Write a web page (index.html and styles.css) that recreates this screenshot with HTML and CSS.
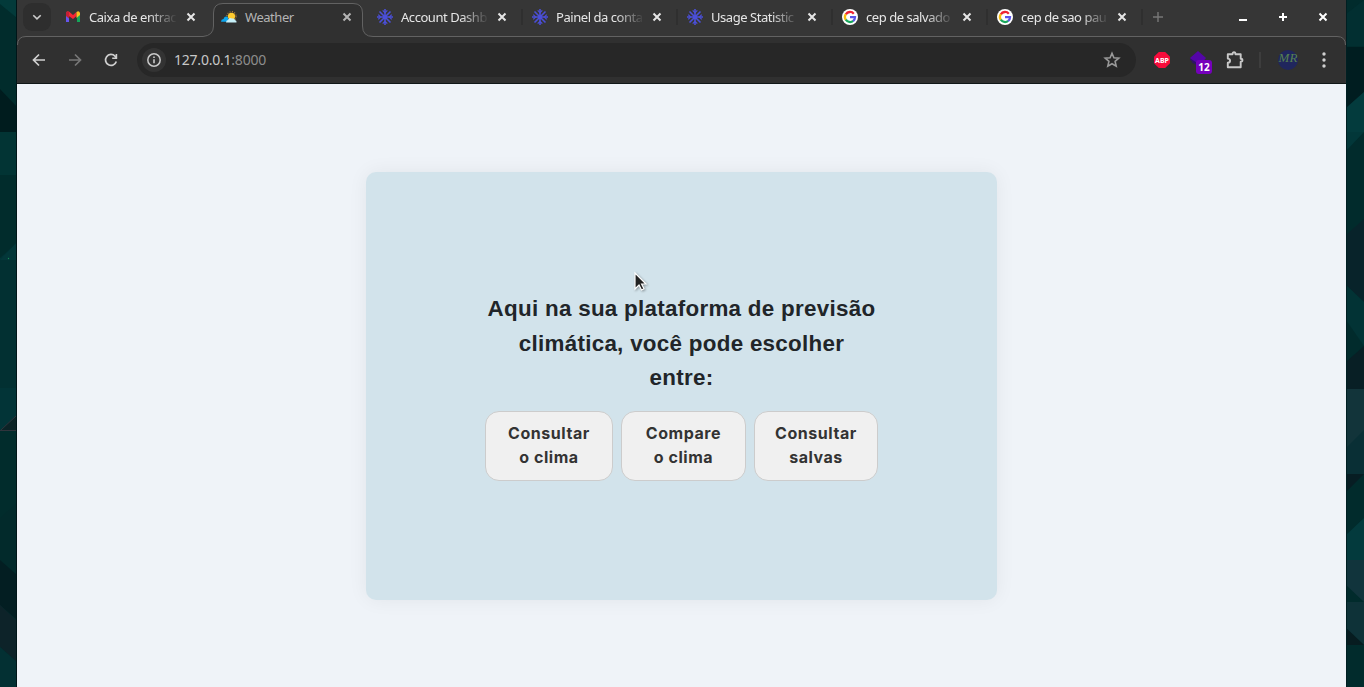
FILE: index.html
```html
<!DOCTYPE html>
<html lang="pt-BR">
<head>
<meta charset="utf-8">
<title>Weather</title>
<link rel="stylesheet" href="styles.css">
</head>
<body>
<svg width="0" height="0" class="defs">
  <symbol id="x" viewBox="0 0 16 16"><path d="M4.5 4.5l7 7M11.5 4.5l-7 7" fill="none" stroke="currentColor" stroke-width="2"/></symbol>
  <symbol id="flake" viewBox="0 0 16 16"><g fill="none" stroke="#4b4fd8" stroke-width="1.6"><path d="M8 0v16M0 8h16M2.500 2.500l11 11M13.500 2.500l-11 11"/><path d="M5.700 1.300L8 3.600l2.300-2.300M5.700 14.700L8 12.400l2.300 2.300M1.300 5.700L3.600 8l-2.300 2.300M14.700 5.700L12.400 8l2.300 2.300" stroke-width="1.2"/></g></symbol>
  <symbol id="google" viewBox="0 0 16 16"><circle cx="8" cy="8" r="8" fill="#fff"/><g fill="none" stroke-width="2.3"><path d="M3.8 5.3A5 5 0 0 1 11.8 4.7" stroke="#ee2434"/><path d="M3.8 5.2a5 5 0 0 0 0 5.6" stroke="#f8bd10"/><path d="M3.8 10.7a5 5 0 0 0 7.4 1.2" stroke="#18a65c"/><path d="M11.1 12A5 5 0 0 0 13 8.2H8" stroke="#5b55e8"/></g></symbol>
</svg>
<div class="desktop">
  <svg class="edge" width="17" height="687" viewBox="0 0 17 687">
    <rect width="17" height="687" fill="#012c2c"/>
    <path d="M0 0h17v18L0 4z" fill="#033a3a"/>
    <path d="M0 89l17 18v25H0z" fill="#001c1e"/>
    <path d="M0 132h17v43H0z" fill="#023434"/>
    <path d="M0 258l17-15v187H0z" fill="#023437"/>
    <path d="M0 260h17v128H0z" fill="#023032"/>
    <path d="M17 242v18H0z" fill="#033739"/>
    <path d="M1 430l16-15v15z" fill="#0b2326"/>
    <path d="M0 430.5h17M1 430l16-15" stroke="#30343c" fill="none"/>
    <path d="M0 518l17-15v72L0 560z" fill="#022a2b"/>
    <path d="M0 560l17 15v45L0 605z" fill="#031e22"/>
    <path d="M0 605l17 16v41L0 647z" fill="#0d2329"/>
    <path d="M0 647l17 15v25H0z" fill="#033033"/>
    <circle cx="8.500" cy="258.500" r=".7" fill="#168555"/>
    <path d="M16.500 0v687" stroke="#001518"/>
  </svg>
  <main class="window">
    <header class="chrome">
      <svg class="outline" width="1329" height="83" viewBox="17 0 1329 83">
        <path d="M17.500 83V45Q17.500 36.500 26 36.500H203Q213.500 35.500 213.500 26V13Q213.500 3.500 223 3.500H353Q362.500 3.500 362.500 13V26Q362.500 36.500 373 36.500H1337Q1345.500 36.500 1345.500 45V83" fill="#303030"/>
        <path d="M17.500 45Q17.500 36.500 26 36.500H203Q213.500 35.500 213.500 26V13Q213.500 3.500 223 3.500H353Q362.500 3.500 362.500 13V26Q362.500 36.500 373 36.500H1337Q1345.500 36.500 1345.500 45" fill="none" stroke="#626262"/>
      </svg>
      <div class="tabs">
        <div class="search-tabs"><svg width="14" height="14" viewBox="0 0 14 14"><path d="M3.300 5.200L7 8.800l3.700-3.600" fill="none" stroke="#ccc" stroke-width="1.600"/></svg></div>
        <div class="tab wide">
          <svg class="icon" viewBox="0 0 16 16"><path d="M1 4v9h3V6.500z" fill="#6655ef"/><path d="M12 6v7h3V4z" fill="#15a65a"/><path d="M1 5V3.500Q2.500 1.500 4.500 3L8 6l3.500-3v4L8 10 1 5z" fill="#f52535"/><path d="M1 3v4l3 2.500V3z" fill="#c42035"/><path d="M11.500 3Q14 1 15 4v2l-3.500 3z" fill="#f8bd20"/></svg>
          <span class="name faded">Caixa de entrac</span><svg class="close"><use href="#x"/></svg>
        </div>
        <div class="tab wide current">
          <svg class="icon" viewBox="0 0 16 16"><circle cx="10.500" cy="7.300" r="4.600" fill="none" stroke="#b98236" stroke-width="1.200" stroke-dasharray="1 1.400"/><circle cx="10.500" cy="7.300" r="3.600" fill="#ffca2e"/><path d="M0 12.700q0-2.400 2.500-2.700 1-3.200 4-2.200l2 4.900z" fill="#0ca5ee"/><path d="M5 13.500q0-2.500 2-2.500 1-3 4-1.500 3-.5 3 1.500 2 .5 1.500 2.500z" fill="#c6eff8"/></svg>
          <span class="name">Weather</span><svg class="close"><use href="#x"/></svg>
        </div>
        <div class="tab"><svg class="icon"><use href="#flake"/></svg><span class="name faded">Account Dashb</span><svg class="close"><use href="#x"/></svg><i class="sep"></i></div>
        <div class="tab"><svg class="icon"><use href="#flake"/></svg><span class="name faded">Painel da conta</span><svg class="close"><use href="#x"/></svg><i class="sep"></i></div>
        <div class="tab"><svg class="icon"><use href="#flake"/></svg><span class="name faded">Usage Statistic</span><svg class="close"><use href="#x"/></svg><i class="sep"></i></div>
        <div class="tab"><svg class="icon"><use href="#google"/></svg><span class="name faded">cep de salvado</span><svg class="close"><use href="#x"/></svg><i class="sep"></i></div>
        <div class="tab"><svg class="icon"><use href="#google"/></svg><span class="name faded">cep de sao pau</span><svg class="close"><use href="#x"/></svg><i class="sep"></i></div>
        <svg class="new-tab" width="12" height="12" viewBox="0 0 12 12"><path d="M6 1v10M1 6h10" stroke="#777" stroke-width="1.400"/></svg>
        <div class="controls">
          <svg viewBox="0 0 16 16"><path d="M4 11h8" stroke="#fff" stroke-width="2"/></svg>
          <svg viewBox="0 0 16 16"><path d="M8 4v8M4 8h8" stroke="#fff" stroke-width="2"/></svg>
          <svg class="white"><use href="#x"/></svg>
        </div>
      </div>
      <div class="toolbar">
        <div class="nav">
          <svg viewBox="0 0 16 16"><path d="M14 8H3M8 2.500L2.500 8 8 13.500" fill="none" stroke="#d0d0d0" stroke-width="1.700"/></svg>
          <svg viewBox="0 0 16 16"><path d="M2 8h11M8 2.500L13.500 8 8 13.500" fill="none" stroke="#777" stroke-width="1.700"/></svg>
          <svg viewBox="0 0 16 16"><path d="M13.300 9.500A5.500 5.500 0 1 1 12 4.100L13.500 6" fill="none" stroke="#d0d0d0" stroke-width="1.700"/><path d="M14.200 2v5H9.200V5.400h3.400V2z" fill="#d0d0d0"/></svg>
        </div>
        <div class="omnibox">
          <div class="info"><svg width="16" height="16" viewBox="0 0 16 16"><circle cx="8" cy="8" r="6.200" fill="none" stroke="#c9c9c9" stroke-width="1.500"/><path d="M8 7.200v4M8 4.500v1.600" stroke="#c9c9c9" stroke-width="1.600"/></svg></div>
          <span class="url">127.0.0.1<span class="port">:8000</span></span>
          <svg class="star" width="18" height="18" viewBox="0 0 18 18"><path d="M9 2.300l1.900 4.500 4.900.4-3.700 3.200 1.100 4.800L9 12.700l-4.200 2.500 1.100-4.800-3.700-3.200 4.900-.4z" fill="none" stroke="#999" stroke-width="1.600"/></svg>
        </div>
        <div class="extensions">
          <div class="abp">ABP</div>
          <div class="ext"><svg width="18" height="18" viewBox="0 0 18 18"><path d="M8 0L0 7l3 4 8 2 5-6z" fill="#5405a8"/><path d="M0 8l6 4M2 10.500l5 3" stroke="#30126a" stroke-width="1.500"/></svg><b class="count">12</b></div>
          <svg class="puzzle" width="20" height="20" viewBox="0 0 20 20"><path d="M2.800 4.200h4.700c0-2.600 3-2.600 3 0h5.200v4.600c2.300 0 2.300 2.900 0 2.900v5.500H2.800v-4.400c3-.3 3-3.900 0-4.200z" fill="none" stroke="#c8c8c8" stroke-width="1.900" stroke-linejoin="round"/></svg>
          <i class="divider"></i>
          <div class="avatar"><span class="initials">MR</span></div>
          <svg class="menu" width="4" height="16" viewBox="0 0 4 16"><g fill="#d0d0d0"><circle cx="2" cy="2" r="1.700"/><circle cx="2" cy="8" r="1.700"/><circle cx="2" cy="14" r="1.700"/></g></svg>
        </div>
      </div>
    </header>
    <section class="page">
      <div class="card">
        <h1 class="title">Aqui na sua plataforma de previsão climática, você pode escolher entre:</h1>
        <div class="choices">
          <button class="choice">Consultar<br>o clima</button>
          <button class="choice">Compare<br>o clima</button>
          <button class="choice">Consultar<br>salvas</button>
        </div>
      </div>
    </section>
  </main>
  <svg class="edge" width="18" height="687" viewBox="0 0 18 687">
    <rect width="18" height="687" fill="#012b2c"/>
    <path d="M0 14L18 0v46H0z" fill="#022f31"/>
    <path d="M0 47h18v45L0 108z" fill="#001d20"/>
    <path d="M0 108l18-16v40H0z" fill="#033b3d"/>
    <path d="M0 132h18L0 151z" fill="#023739"/>
    <path d="M0 235l18-16v83L0 285z" fill="#08232a"/>
    <path d="M0 285l18 17v44L0 320z" fill="#023335"/>
    <path d="M0 362l18-16v43H0z" fill="#081f25"/>
    <path d="M0 389h18v85H0z" fill="#12343a"/>
    <path d="M0 448l18-18v44H0z" fill="#092f35"/>
    <path d="M0 474h18L0 492z" fill="#071d23"/>
    <path d="M0 535l18-17v42H0z" fill="#033a3d"/>
    <path d="M0 560h18v42L0 585z" fill="#11343c"/>
    <path d="M0 602h18v43L0 628z" fill="#0e3238"/>
    <path d="M0 628l18 17H0z" fill="#071c20"/>
    <path d="M.500 0v687" stroke="#001f22"/>
  </svg>
  <svg class="cursor" width="16" height="22" viewBox="0 0 16 22"><path d="M2 2v16l4-4 2.500 5 2.500-1.200-2.400-4.800H13z" fill="#222" stroke="#fff" stroke-width="1.200"/></svg>
</div>
</body>
</html>
```

FILE: styles.css
```css
* { box-sizing: border-box; }
body { margin: 0; overflow: hidden; font-family: "Noto Sans", sans-serif; }
.defs { position: absolute; }
.desktop { position: relative; display: flex; width: 1364px; height: 687px; background: #012c2c; }
.edge { flex: none; display: block; }
.window { flex: 1; display: flex; flex-direction: column; min-width: 0; }
.chrome { position: relative; height: 84px; background: #363636; border-bottom: 1px solid #111818; }
.outline { position: absolute; left: 0; top: 0; }
.tabs { position: relative; display: flex; align-items: center; height: 34px; padding-left: 6px; }
.search-tabs { display: flex; align-items: center; justify-content: center; width: 28px; height: 28px; margin-right: 6px; border-radius: 9px; background: #2e2e2e; }
.tab { display: flex; align-items: center; flex: none; width: 155px; padding-left: 8px; font-size: 13px; color: #e6e6e6; }
.wide { width: 156px; }
.icon { flex: none; width: 16px; height: 16px; }
.name { width: 93px; margin: 0 0 0 8px; white-space: nowrap; letter-spacing: -.45px; }
.faded { mask-image: linear-gradient(90deg, #000 60px, transparent 88px); }
.close { flex: none; width: 16px; height: 16px; }
.wide .close { margin-left: 1px; }
.current { color: #b4b4b4; }
.sep { width: 2px; height: 16px; margin-left: 11px; background: #2f2f2f; }
.new-tab { margin-left: 8px; }
.controls { display: flex; gap: 24px; margin-left: auto; padding-right: 15px; }
.controls svg { width: 16px; height: 16px; }
.white { color: #fff; }
.toolbar { position: relative; display: flex; align-items: center; height: 34px; margin-top: 9px; padding-left: 14px; }
.nav { display: flex; gap: 20px; margin-right: 18px; }
.nav svg { width: 16px; height: 16px; }
.omnibox { display: flex; align-items: center; width: 999px; height: 34px; padding: 0 15px 0 5px; border-radius: 17px; background: #272727; }
.info { display: flex; align-items: center; justify-content: center; width: 24px; height: 24px; border-radius: 12px; background: #333; }
.url { margin: 0 0 2px 8px; font-size: 14px; letter-spacing: -.22px; color: #c8c8c8; }
.port { color: #8d8d8d; }
.star { margin-left: auto; }
.extensions { display: flex; align-items: center; margin-left: 18px; }
.abp { display: flex; align-items: center; justify-content: center; width: 16px; height: 16px; background: #f70b3b; color: #fff; font: bold 7px "Noto Sans", sans-serif; clip-path: polygon(30% 0, 70% 0, 100% 30%, 100% 70%, 70% 100%, 30% 100%, 0 70%, 0 30%); }
.ext { position: relative; width: 18px; height: 18px; margin-left: 20px; }
.count { position: absolute; left: 6px; top: 9px; width: 16px; height: 14px; border-radius: 3px; background: #7500bb; color: #fff; font: bold 10px/15px "Noto Sans", sans-serif; text-align: center; }
.puzzle { margin-left: 17px; }
.divider { width: 2px; height: 16px; margin-left: 14px; background: #3d3d3d; }
.avatar { display: flex; align-items: center; justify-content: center; width: 20px; height: 20px; margin-left: 17px; border-radius: 10px; background: #20265d; }
.initials { color: #568051; font: italic 13px/20px "Liberation Serif", serif; transform: translateY(-2px); }
.menu { margin-left: 24px; }
.page { flex: 1; display: flex; align-items: flex-start; justify-content: center; padding-top: 88px; background: #eff3f8; }
.card { display: flex; flex-direction: column; align-items: center; width: 631px; height: 428px; padding-top: 120px; border-radius: 10px; background: #d2e3eb; box-shadow: 0 0 20px rgba(0, 0, 0, .06); }
.title { width: 393px; margin: 0 0 15.5px; color: #212529; font: bold 22.4px/34.5px "Liberation Sans", sans-serif; letter-spacing: .28px; text-align: center; }
.choices { display: grid; grid-template-columns: 128px 125px 124px; gap: 8px; }
.choice { height: 70px; padding: 0 0 2px; border: 1px solid #ccc; border-radius: 14px; background: #f0f0f0; color: #333; font: 700 16px/24px Inter, sans-serif; letter-spacing: .55px; }
.cursor { position: absolute; left: 633px; top: 271px; filter: drop-shadow(1px 1px 1px rgba(0, 0, 0, .35)); }
```
